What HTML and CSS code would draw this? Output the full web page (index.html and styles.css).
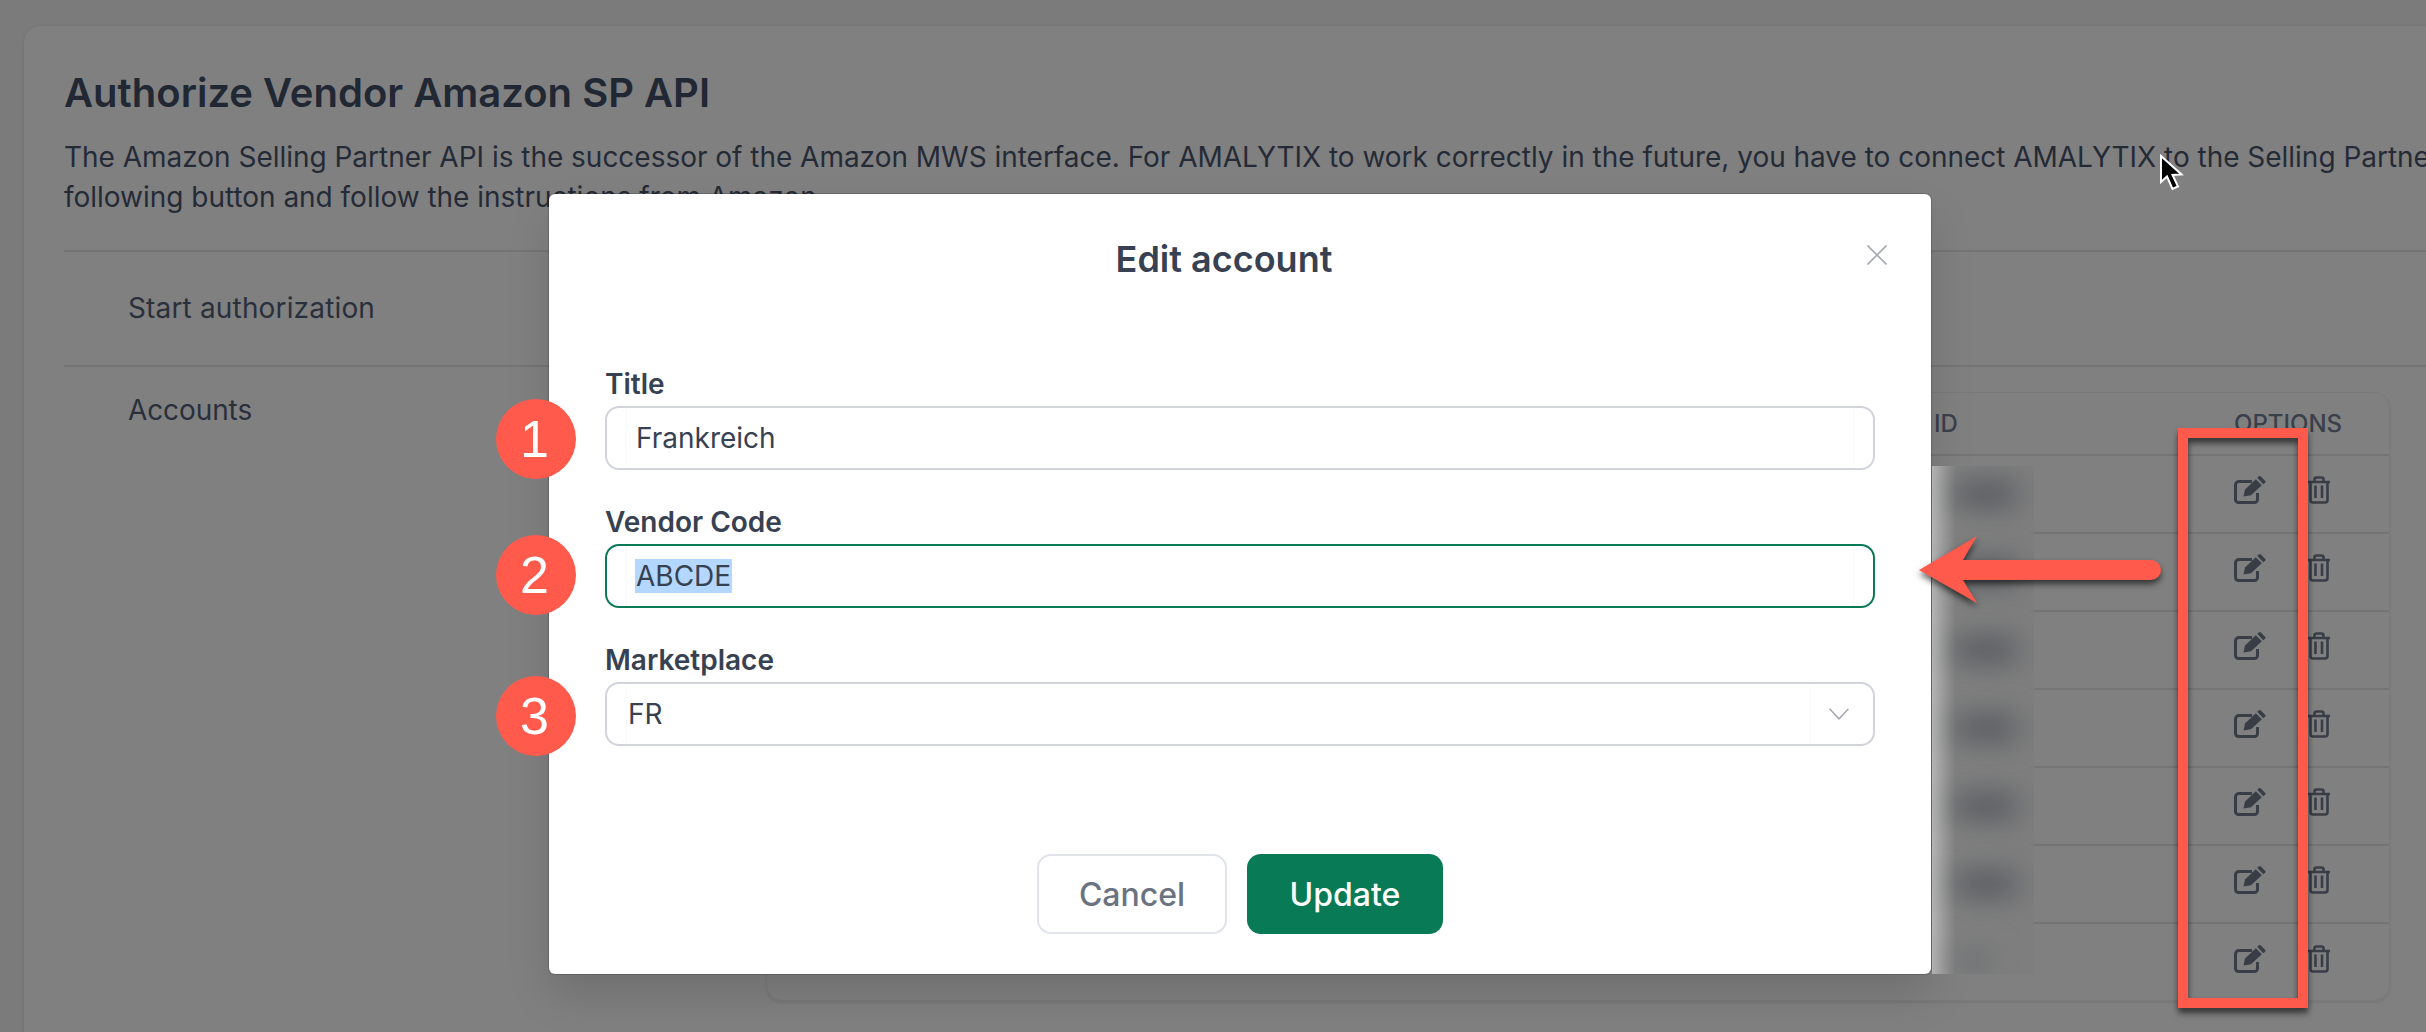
FILE: index.html
```html
<!DOCTYPE html>
<html lang="en">
<head>
<meta charset="utf-8">
<title>Authorize Vendor Amazon SP API</title>
<link rel="stylesheet" href="styles.css">
</head>
<body>
<svg class="defs" width="0" height="0" aria-hidden="true">
  <symbol id="edit" viewBox="0 0 32 28">
    <path d="M18 5.500H5a3.500 3.500 0 0 0-3.500 3.500v14.500A3 3 0 0 0 4.500 26.500h16a3 3 0 0 0 3-3V17" fill="none" stroke="currentColor" stroke-width="3"/>
    <path d="M9.500 20.500L11 13.500 21.800 3.200 27.800 9.200 17 19.300Z" fill="currentColor"/>
    <path d="M23.200 1.800L24.800.4q1-.8 2 0l4.300 4.300q.9 1 0 2L29.300 8.200Z" fill="currentColor"/>
  </symbol>
  <symbol id="trash" viewBox="0 0 22 28">
    <path d="M0 6H22M6.500 6V3.500Q6.500 1.500 8.500 1.500H13.500Q15.500 1.500 15.500 3.500V6M2.500 6V24Q2.500 26.500 5 26.500H17Q19.500 26.500 19.500 24V6" fill="none" stroke="currentColor" stroke-width="2.600"/>
    <path d="M7.500 9.500V22M14 9.500V22" fill="none" stroke="currentColor" stroke-width="2.600"/>
  </symbol>
</svg>

<main class="card">
  <h1 class="card-title">Authorize Vendor Amazon SP API</h1>
  <p class="intro">The Amazon Selling Partner API is the successor of the Amazon MWS interface. For AMALYTIX to work correctly in the future, you have to connect AMALYTIX to the Selling Partner API. To do this, click on the<br>following button and follow the instructions from Amazon.</p>

  <section class="row row-start">
    <div class="row-label row-label-wide">Start authorization</div>
  </section>

  <section class="row row-accounts">
    <div class="row-label">Accounts</div>
    <div class="panel">
      <div class="tr th"><span></span><span>ID</span><span>OPTIONS</span></div>
      <div class="tr"><span></span><span></span><span class="opts"><svg class="i-edit"><use href="#edit"/></svg><svg class="i-trash"><use href="#trash"/></svg></span></div>
      <div class="tr"><span></span><span></span><span class="opts"><svg class="i-edit"><use href="#edit"/></svg><svg class="i-trash"><use href="#trash"/></svg></span></div>
      <div class="tr"><span></span><span></span><span class="opts"><svg class="i-edit"><use href="#edit"/></svg><svg class="i-trash"><use href="#trash"/></svg></span></div>
      <div class="tr"><span></span><span></span><span class="opts"><svg class="i-edit"><use href="#edit"/></svg><svg class="i-trash"><use href="#trash"/></svg></span></div>
      <div class="tr"><span></span><span></span><span class="opts"><svg class="i-edit"><use href="#edit"/></svg><svg class="i-trash"><use href="#trash"/></svg></span></div>
      <div class="tr"><span></span><span></span><span class="opts"><svg class="i-edit"><use href="#edit"/></svg><svg class="i-trash"><use href="#trash"/></svg></span></div>
      <div class="tr"><span></span><span></span><span class="opts"><svg class="i-edit"><use href="#edit"/></svg><svg class="i-trash"><use href="#trash"/></svg></span></div>
    </div>
  </section>
</main>

<div class="modal" role="dialog">
  <h2 class="modal-title">Edit account</h2>
  <svg class="close" viewBox="0 0 20 20"><path d="M.5.500L19.500 19.500M19.500.500L.5 19.500"/></svg>
  <form class="form">
    <div class="field">
      <label class="label">Title</label>
      <div class="input"><div class="input-inner"><span class="value">Frankreich</span></div></div>
    </div>
    <div class="field">
      <label class="label">Vendor Code</label>
      <div class="input input-focus"><div class="input-inner"><span class="value selected">ABCDE</span></div></div>
    </div>
    <div class="field">
      <label class="label">Marketplace</label>
      <div class="input input-select">
        <div class="select-inner"><span>FR</span></div>
        <svg class="chevron" viewBox="0 0 20 12"><path d="M.5.700L10 10.800 19.500.7"/></svg>
      </div>
    </div>
  </form>
  <div class="footer">
    <button class="btn btn-cancel" type="button">Cancel</button>
    <button class="btn btn-update" type="button">Update</button>
  </div>
</div>

<div class="smear">
  <i class="blob"></i><i class="blob"></i><i class="blob"></i><i class="blob"></i><i class="blob"></i><i class="blob"></i><i class="blob blob-last"></i>
</div>

<div class="badge badge-1">1</div>
<div class="badge badge-2">2</div>
<div class="badge badge-3">3</div>

<div class="mark-rect"></div>
<svg class="mark-arrow" viewBox="0 0 250 72"><path d="M1 35L59 1 45 25H233a10 10 0 0 1 0 20H45L59 68Z"/></svg>
<svg class="pointer" viewBox="0 0 26 38"><path d="M2 2V28L8 22.500 13.500 35 19 32.500 13.500 21 22.500 20.500Z"/></svg>
</body>
</html>
```

FILE: styles.css
```css
* { box-sizing: border-box; }

html, body { height: 100%; }

body {
  margin: 0;
  height: 1032px;
  padding: 26px 0 0 24px;
  overflow: hidden;
  position: relative;
  background: #7a7b7a;
  font-family: Inter, "Liberation Sans", sans-serif;
  color: #2a303b;
}

.defs { position: absolute; }

.card {
  width: 2500px;
  height: 1100px;
  padding: 39px 0 0 40px;
  background: #808080;
  border-radius: 16px;
  box-shadow: 0 0 3px rgba(0, 0, 0, .1);
}

.card-title {
  margin: 0;
  font-size: 40px;
  line-height: 56px;
  font-weight: 600;
  color: #212733;
}

.intro {
  margin: 16px 0 33px;
  font-size: 28px;
  line-height: 40px;
  letter-spacing: -.02px;
  white-space: nowrap;
  color: #252b36;
}

.row {
  display: flex;
  border-top: 2px solid #747474;
}

.row-start { padding: 36px 0 37px; }

.row-accounts { padding-top: 25px; }

.row-label {
  width: 702px;
  padding-left: 64px;
  font-size: 28px;
  line-height: 40px;
  color: #2a303b;
}

.row-label-wide { letter-spacing: .16px; }

.row-accounts .row-label { margin-top: -2px; letter-spacing: -.1px; }

.panel {
  width: 1624px;
  height: 609px;
  border: 1px solid #7a7a7a;
  border-radius: 16px;
  box-shadow: 0 2px 3px rgba(0, 0, 0, .08);
}

.tr {
  display: grid;
  grid-template-columns: 1167px 300px 1fr;
  align-items: center;
  height: 78px;
  border-bottom: 2px solid #747474;
}

.tr:last-child { border-bottom: 0; }

.th {
  height: 63px;
  font-size: 24px;
  font-weight: 500;
  color: #3a404a;
}

.opts {
  display: flex;
  align-items: center;
  gap: 42px;
  padding-bottom: 8px;
  color: #383d46;
}

.i-edit { width: 32px; height: 28px; }
.i-trash { width: 22px; height: 28px; }

.modal {
  position: absolute;
  left: 549px;
  top: 194px;
  width: 1382px;
  height: 780px;
  display: flex;
  flex-direction: column;
  background: #fff;
  border-radius: 6px;
  box-shadow: 0 22px 44px rgba(0, 0, 0, .13), 0 0 0 1px rgba(0, 0, 0, .16);
}

.modal-title {
  margin: 38px 32px 0 0;
  font-size: 36px;
  line-height: 54px;
  font-weight: 600;
  text-align: center;
  color: #374151;
}

.close {
  position: absolute;
  top: 51px;
  right: 44px;
  width: 20px;
  height: 20px;
  fill: none;
  stroke: #a4a8b2;
  stroke-width: 1.600;
}

.form {
  display: flex;
  flex-direction: column;
  gap: 32px;
  margin-top: 78px;
  padding: 0 56px 0 56px;
}

.label {
  display: block;
  margin-bottom: 2px;
  font-size: 28px;
  line-height: 40px;
  font-weight: 600;
  color: #374151;
}

.input {
  height: 64px;
  display: flex;
  align-items: stretch;
  padding: 0 19px 0 19px;
  border: 2px solid #d1d5db;
  border-radius: 14px;
  font-size: 28px;
  color: #374151;
}

.input-focus { border-color: #0a7a56; }

.input-inner {
  flex: 1;
  display: flex;
  align-items: center;
  padding-left: 9px;
  border-left: 1px solid #f8f9fa;
  border-right: 1px solid #f8f9fa;
}

.selected {
  padding: 0 1px;
  margin-left: -1px;
  line-height: 34px;
  background: #b3d7ff;
}

.input-select { padding-right: 0; }

.select-inner {
  flex: 1;
  display: flex;
  align-items: center;
  border-left: 1px solid #f8f9fa;
  border-right: 1px solid #f8f9fa;
  padding-left: 1px;
}

.chevron {
  align-self: center;
  width: 20px;
  height: 12px;
  margin: 0 24px 0 18px;
  fill: none;
  stroke: #a4a8b2;
  stroke-width: 1.600;
}

.footer {
  display: flex;
  justify-content: center;
  gap: 20px;
  margin-top: auto;
  padding-bottom: 40px;
}

.btn {
  height: 80px;
  border-radius: 14px;
  font-family: inherit;
  font-size: 32px;
  font-weight: 500;
}

.btn-cancel {
  width: 190px;
  background: #fff;
  border: 2px solid #e1e4ea;
  color: #6b7280;
}

.btn-update {
  width: 196px;
  background: #097a56;
  border: 0;
  color: #fff;
}

.smear {
  position: absolute;
  left: 1932px;
  top: 466px;
  width: 102px;
  height: 508px;
  overflow: hidden;
  display: flex;
  flex-direction: column;
  background: linear-gradient(90deg, #b4b4b4 0, #a2a2a2 8px, #808080 24px, #7e7e7e 100%);
}

.blob {
  flex: none;
  width: 60px;
  height: 28px;
  margin: 14px 0 36px 24px;
  background: #585c60;
  filter: blur(14px);
}

.blob-last {
  width: 36px;
  background: #707274;
}

.badge {
  position: absolute;
  left: 496px;
  width: 80px;
  height: 80px;
  padding-right: 3px;
  border-radius: 50%;
  background: #ff5a4c;
  color: #fff;
  font-family: "Liberation Sans", Arial, sans-serif;
  font-size: 52px;
  line-height: 80px;
  text-align: center;
}

.badge-1 { top: 399px; }
.badge-2 { top: 535px; }
.badge-3 { top: 676px; }

.mark-rect {
  position: absolute;
  left: 2178px;
  top: 428px;
  width: 130px;
  height: 580px;
  border: 10px solid #ff5a4c;
  filter: drop-shadow(0 5px 3px rgba(0, 0, 0, .6));
}

.mark-arrow {
  position: absolute;
  left: 1918px;
  top: 535px;
  width: 250px;
  height: 72px;
  fill: #ff5a4c;
  overflow: visible;
  filter: drop-shadow(0 4px 3px rgba(0, 0, 0, .6));
}

.pointer {
  position: absolute;
  left: 2159px;
  top: 154px;
  width: 26px;
  height: 38px;
  fill: #000;
  stroke: #fff;
  stroke-width: 2;
}
```
